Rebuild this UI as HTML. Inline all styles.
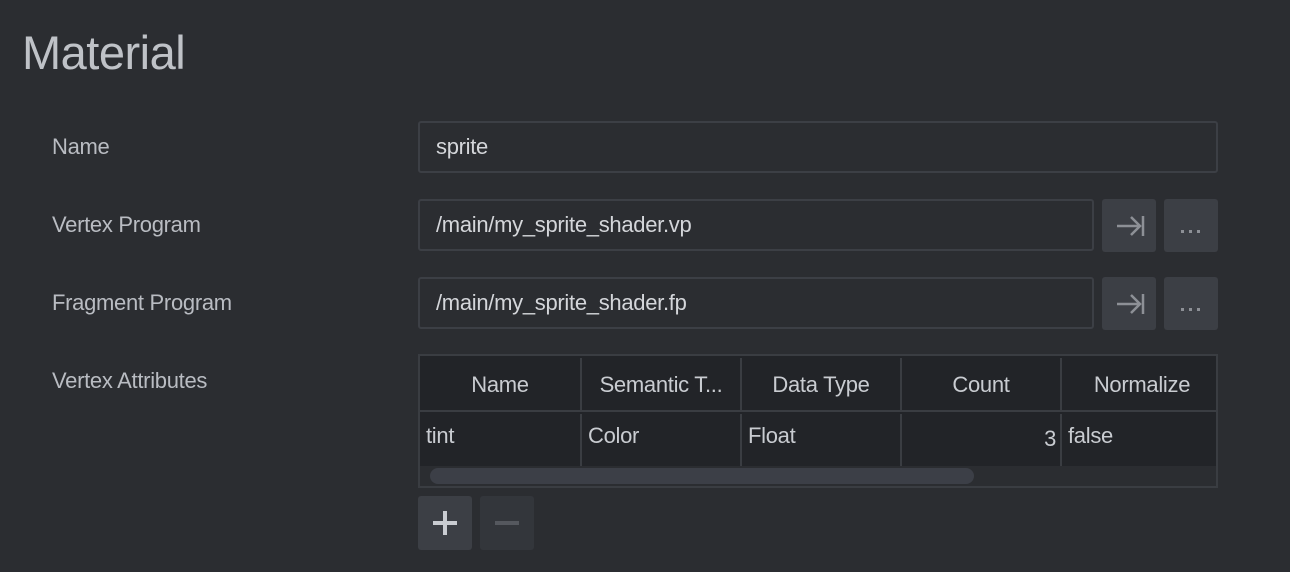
<!DOCTYPE html>
<html><head><style>
*{box-sizing:border-box;margin:0;padding:0}
body{width:1290px;height:572px;background:#2b2d31;font-family:"Liberation Sans",sans-serif;color:#c9ccd1;position:relative;overflow:hidden}
.a{position:absolute}
.t{left:22px;top:25px;font-size:47px;font-weight:300;color:#bfc2c7;letter-spacing:-0.5px}
.l{left:52px;font-size:22px;color:#b9bcc2;letter-spacing:-0.3px}
.in{border:2px solid #3c3f45;border-radius:3px;background:#2b2d31;font-size:22px;padding-left:16px;line-height:48px;color:#d4d6da;letter-spacing:-0.3px}
.b{background:#3c3f45;border-radius:3px}
.b svg{position:absolute;left:0;top:0}
.tb{left:418px;top:354px;width:800px;height:134px;border:2px solid #3a3d42;background:#222428;overflow:hidden}
.h{position:absolute;top:2px;height:54px;line-height:54px;text-align:center;font-size:22px;border-right:2px solid #3a3d42;color:#c9ccd1;letter-spacing:-0.3px}
.c{position:absolute;top:58px;height:52px;line-height:44px;font-size:22px;padding-left:6px;border-right:2px solid #3a3d42;letter-spacing:-0.3px}
</style></head><body>
<div class="a t">Material</div>
<div class="a l" style="top:134px">Name</div>
<div class="a l" style="top:212px">Vertex Program</div>
<div class="a l" style="top:290px">Fragment Program</div>
<div class="a l" style="top:368px">Vertex Attributes</div>
<div class="a in" style="left:418px;top:121px;width:800px;height:52px">sprite</div>
<div class="a in" style="left:418px;top:199px;width:676px;height:52px">/main/my_sprite_shader.vp</div>
<div class="a in" style="left:418px;top:277px;width:676px;height:52px">/main/my_sprite_shader.fp</div>
<div class="a b" style="left:1102px;top:199px;width:54px;height:53px"><svg width="54" height="53"><path d="M15 27H38M29 18L38 27L29 36M41 17V37" stroke="#8d9096" stroke-width="2.5" fill="none"/></svg></div>
<div class="a b" style="left:1164px;top:199px;width:54px;height:53px"><svg width="54" height="53"><g fill="#8d9096"><rect x="17" y="31" width="3" height="3"/><rect x="25" y="31" width="3" height="3"/><rect x="33" y="31" width="3" height="3"/></g></svg></div>
<div class="a b" style="left:1102px;top:277px;width:54px;height:53px"><svg width="54" height="53"><path d="M15 27H38M29 18L38 27L29 36M41 17V37" stroke="#8d9096" stroke-width="2.5" fill="none"/></svg></div>
<div class="a b" style="left:1164px;top:277px;width:54px;height:53px"><svg width="54" height="53"><g fill="#8d9096"><rect x="17" y="31" width="3" height="3"/><rect x="25" y="31" width="3" height="3"/><rect x="33" y="31" width="3" height="3"/></g></svg></div>
<div class="a tb">
<div style="position:absolute;left:0;top:54px;width:800px;height:2px;background:#3a3d42"></div>
<div class="h" style="left:0;width:162px">Name</div>
<div class="h" style="left:162px;width:160px">Semantic T...</div>
<div class="h" style="left:322px;width:160px">Data Type</div>
<div class="h" style="left:482px;width:160px">Count</div>
<div class="h" style="left:642px;width:160px;border:0">Normalize</div>
<div class="c" style="left:0;width:162px">tint</div>
<div class="c" style="left:162px;width:160px">Color</div>
<div class="c" style="left:322px;width:160px">Float</div>
<div class="c" style="left:482px;width:160px;text-align:right;padding-right:4px;line-height:50px">3</div>
<div class="c" style="left:642px;width:160px;border:0">false</div>
<div style="position:absolute;left:0;top:110px;width:800px;height:22px;background:#2b2d31"></div>
<div style="position:absolute;left:10px;top:112px;width:544px;height:16px;border-radius:8px;background:#3c3f47"></div>
</div>
<div class="a b" style="left:418px;top:496px;width:54px;height:54px"><svg width="54" height="54"><path d="M27 15V39M15 27H39" stroke="#c9ccd1" stroke-width="4"/></svg></div>
<div class="a b" style="left:480px;top:496px;width:54px;height:54px;background:#33363b"><svg width="54" height="54"><path d="M15 27H39" stroke="#55585e" stroke-width="4"/></svg></div>
</body></html>
